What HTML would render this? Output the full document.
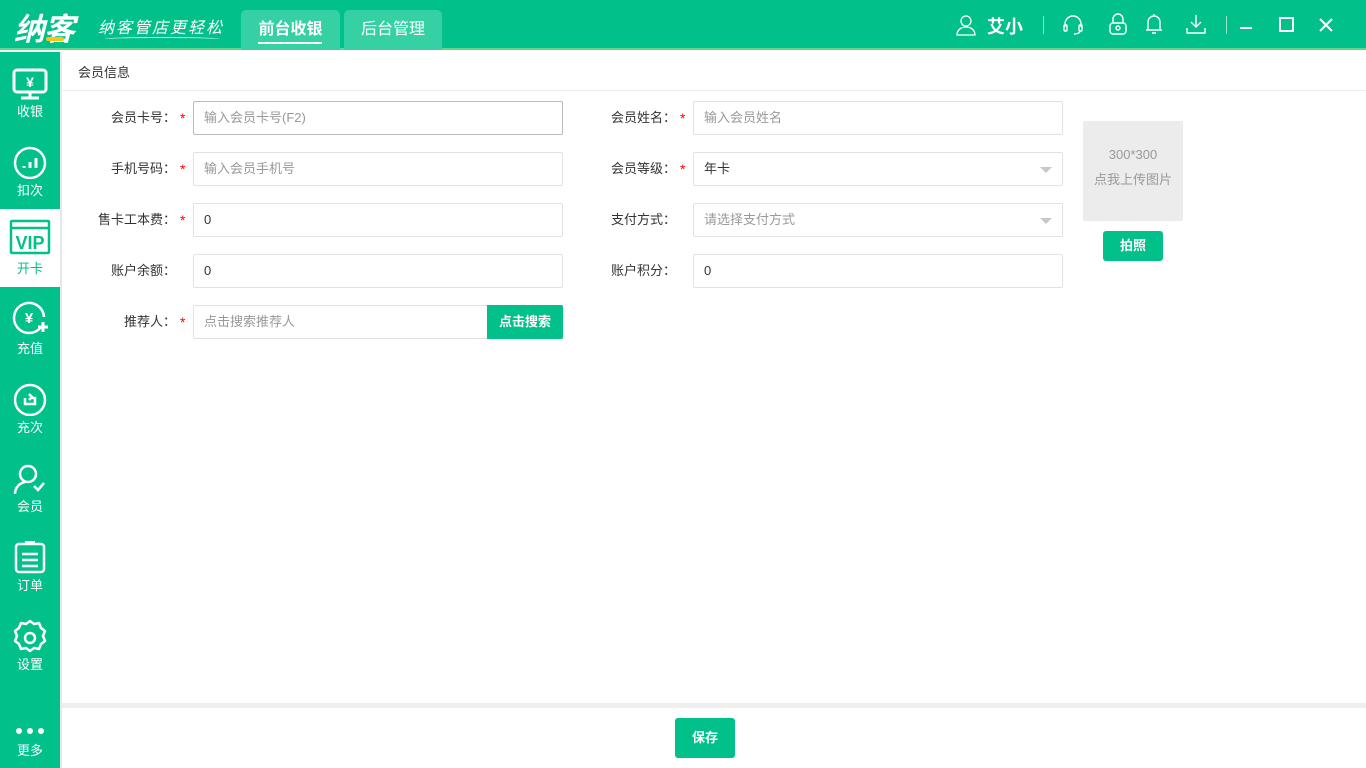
<!DOCTYPE html>
<html><head><meta charset="utf-8"><style>
*{margin:0;padding:0;box-sizing:border-box}
body{width:1366px;height:768px;overflow:hidden;position:relative;background:#fff;font-family:"Liberation Sans","Noto Sans CJK SC",sans-serif;font-size:13px;color:#333}
.abs{position:absolute}
.top{left:0;top:0;width:1366px;height:50px;background:#02c08a;border-bottom:2px solid #5fd88f}
.tab{top:10px;height:40px;border-radius:5px 5px 0 0;background:#35d0a4;color:#fff;font-size:16px;text-align:center;line-height:40px}
.side{left:0;top:52px;width:60px;height:716px;background:#02c08a}
.gap{left:60px;top:52px;width:2px;height:716px;background:#e8e8e8}
.it{left:0;width:60px;height:79px;color:#fff;text-align:center;font-size:13px}
.it svg{display:block;margin:8px auto 0}
.it span{position:absolute;left:0;width:60px;top:49px}
.lbl{width:126px;text-align:right;font-size:13px;color:#333;line-height:34px}
.star{color:#f00;font-size:14px;line-height:34px}
.inp{height:34px;border:1px solid #e2e2e2;border-radius:2px;line-height:32px;padding-left:10px;color:#999;font-size:13px}
.v{color:#333}
.btn{background:#02c08a;color:#fff;border-radius:3px;text-align:center;font-size:13px}
.arr{position:absolute;right:10px;top:14px;width:0;height:0;border-left:6px solid transparent;border-right:6px solid transparent;border-top:6px solid #c8c8c8}
</style></head><body>
<div class="abs top"></div>
<div class="abs" style="left:14px;top:4px;color:#fff;font-size:31px;font-weight:bold;font-style:italic;letter-spacing:-1px">纳客</div>
<div class="abs" style="left:46px;top:37px;width:18px;height:4px;background:#f5c518;border-radius:2px"></div>
<div class="abs" style="left:98px;top:14px;color:#fff;font-size:16px;font-style:italic;letter-spacing:2px">纳客管店更轻松</div>
<div class="abs" style="left:104px;top:37px;width:116px;height:4px;border-top:1px solid #d8f5ea;border-radius:50%"></div>
<div class="abs tab" style="left:241px;width:99px;font-weight:bold">前台收银<div style="position:absolute;left:17px;top:32px;width:64px;height:2px;background:#fff"></div></div>
<div class="abs tab" style="left:344px;width:98px">后台管理</div>
<svg class="abs" style="left:955px;top:14px" width="22" height="22" viewBox="0 0 22 22" fill="none" stroke="#fff" stroke-width="1.3"><circle cx="11" cy="7" r="5"/><path d="M2 21c0-5 4-8 9-8s9 3 9 8z"/></svg>
<div class="abs" style="left:987px;top:13px;color:#fff;font-size:18px;font-weight:bold">艾小</div>
<div class="abs" style="left:1043px;top:16px;width:1px;height:18px;background:#9fe3c8"></div>
<svg class="abs" style="left:1062px;top:14px" width="22" height="22" viewBox="0 0 22 22" fill="none" stroke="#fff" stroke-width="1.4"><path d="M3 13v-3a8 8 0 0 1 16 0v3"/><rect x="2" y="11" width="3" height="6" rx="1"/><rect x="17" y="11" width="3" height="6" rx="1"/><path d="M18 17c0 2-3 3-6 3"/></svg>
<svg class="abs" style="left:1108px;top:13px" width="20" height="22" viewBox="0 0 20 22" fill="none" stroke="#fff" stroke-width="1.4"><path d="M5 10V6a5 5 0 0 1 10 0v4"/><rect x="2" y="10" width="16" height="11" rx="3"/><circle cx="10" cy="15" r="2"/></svg>
<svg class="abs" style="left:1144px;top:13px" width="20" height="22" viewBox="0 0 20 22" fill="none" stroke="#fff" stroke-width="1.4"><path d="M4 17V9a6 6 0 0 1 12 0v8zM2 17h16M8 20h4M10 3V1"/></svg>
<svg class="abs" style="left:1185px;top:13px" width="22" height="22" viewBox="0 0 22 22" fill="none" stroke="#fff" stroke-width="1.4"><path d="M11 2v12M6 9l5 5 5-5M2 15v5h18v-5"/></svg>
<div class="abs" style="left:1226px;top:16px;width:1px;height:18px;background:#9fe3c8"></div>
<div class="abs" style="left:1240px;top:27px;width:12px;height:2px;background:#fff"></div>
<div class="abs" style="left:1279px;top:17px;width:15px;height:15px;border:2px solid #fff"></div>
<svg class="abs" style="left:1319px;top:18px" width="14" height="14" viewBox="0 0 14 14" stroke="#fff" stroke-width="2"><path d="M1 1l12 12M13 1L1 13"/></svg>

<div class="abs side"></div>
<div class="abs gap"></div>
<div class="abs it" style="top:52px"><svg width="38" height="40" viewBox="0 0 38 40" fill="none" stroke="#fff" stroke-width="3"><rect x="3" y="10" width="32" height="22" rx="3"/><path d="M19 32v6M10 38h18"/><text x="19" y="27" font-size="14" fill="#fff" stroke="none" text-anchor="middle" font-weight="bold">¥</text></svg><span style="top:49px">收银</span></div>
<div class="abs it" style="top:131px"><svg width="38" height="40" viewBox="0 0 38 40" fill="none" stroke="#fff" stroke-width="2.5"><circle cx="19" cy="24" r="15"/><path d="M13 29v-2M19 29v-6M25 29v-10" stroke-width="3"/></svg><span>扣次</span></div>
<div class="abs it" style="top:209px;background:#fff;color:#02c08a;height:78px"><svg width="44" height="40" viewBox="0 0 44 40" fill="none" stroke="#02c08a" stroke-width="2.5"><rect x="3" y="4" width="38" height="32" rx="1"/><path d="M3 11h38"/><text x="22" y="32" font-size="18" fill="#02c08a" stroke="none" text-anchor="middle" font-weight="bold">VIP</text></svg><span>开卡</span></div>
<div class="abs it" style="top:289px"><svg width="38" height="40" viewBox="0 0 38 40" fill="none" stroke="#fff" stroke-width="2.5"><path d="M30 30A15 15 0 1 1 33 20"/><path d="M27 30h10M32 25v10" stroke-width="3"/><text x="18" y="26" font-size="15" fill="#fff" stroke="none" text-anchor="middle" font-weight="bold">¥</text></svg><span>充值</span></div>
<div class="abs it" style="top:368px"><svg width="38" height="40" viewBox="0 0 38 40" fill="none" stroke="#fff" stroke-width="2.5"><circle cx="19" cy="24" r="15"/><path d="M14 22v6h10v-6h-4M18 18l3 3-3 3"/></svg><span>充次</span></div>
<div class="abs it" style="top:447px"><svg width="38" height="40" viewBox="0 0 38 40" fill="none" stroke="#fff" stroke-width="2.5"><circle cx="17" cy="19" r="8"/><path d="M4 39c0-7 5-11 10-12M23 31l4 4 6-7"/></svg><span>会员</span></div>
<div class="abs it" style="top:526px"><svg width="38" height="40" viewBox="0 0 38 40" fill="none" stroke="#fff" stroke-width="2.5"><rect x="5" y="10" width="28" height="28" rx="3"/><path d="M14 9h10" stroke-width="4"/><path d="M11 20h16M11 26h16M11 32h16"/></svg><span>订单</span></div>
<div class="abs it" style="top:605px"><svg width="38" height="40" viewBox="0 0 38 40" fill="none" stroke="#fff" stroke-width="2.5"><path d="M19 8l4 3 5-1 2 5 4 3-2 5 2 5-4 3-2 5-5-1-4 3-4-3-5 1-2-5-4-3 2-5-2-5 4-3 2-5 5 1z" stroke-linejoin="round"/><circle cx="19" cy="25" r="5"/></svg><span>设置</span></div>
<div class="abs" style="left:16px;top:728px;width:28px;height:6px;display:flex;justify-content:space-between"><i style="width:6px;height:6px;border-radius:3px;background:#fff"></i><i style="width:6px;height:6px;border-radius:3px;background:#fff"></i><i style="width:6px;height:6px;border-radius:3px;background:#fff"></i></div>
<div class="abs" style="left:0;top:740px;width:60px;text-align:center;color:#fff">更多</div>

<div class="abs" style="left:78px;top:62px;font-size:13px;color:#333">会员信息</div>
<div class="abs" style="left:62px;top:90px;width:1304px;height:1px;background:#eee"></div>

<div class="abs lbl" style="left:50px;top:101px">会员卡号：</div><div class="abs star" style="left:180px;top:101px">*</div><div class="abs inp" style="left:193px;top:101px;width:370px;border-color:#bbb">输入会员卡号(F2)</div>
<div class="abs lbl" style="left:50px;top:152px">手机号码：</div><div class="abs star" style="left:180px;top:152px">*</div><div class="abs inp" style="left:193px;top:152px;width:370px">输入会员手机号</div>
<div class="abs lbl" style="left:50px;top:203px">售卡工本费：</div><div class="abs star" style="left:180px;top:203px">*</div><div class="abs inp v" style="left:193px;top:203px;width:370px">0</div>
<div class="abs lbl" style="left:50px;top:254px">账户余额：</div><div class="abs inp v" style="left:193px;top:254px;width:370px">0</div>
<div class="abs lbl" style="left:50px;top:305px">推荐人：</div><div class="abs star" style="left:180px;top:305px">*</div><div class="abs inp" style="left:193px;top:305px;width:296px">点击搜索推荐人</div>
<div class="abs btn" style="left:487px;top:305px;width:76px;height:34px;line-height:34px;border-radius:0 2px 2px 0;font-weight:bold">点击搜索</div>

<div class="abs lbl" style="left:550px;top:101px">会员姓名：</div><div class="abs star" style="left:680px;top:101px">*</div><div class="abs inp" style="left:693px;top:101px;width:370px">输入会员姓名</div>
<div class="abs lbl" style="left:550px;top:152px">会员等级：</div><div class="abs star" style="left:680px;top:152px">*</div><div class="abs inp v" style="left:693px;top:152px;width:370px">年卡<i class="arr"></i></div>
<div class="abs lbl" style="left:550px;top:203px">支付方式：</div><div class="abs inp" style="left:693px;top:203px;width:370px">请选择支付方式<i class="arr"></i></div>
<div class="abs lbl" style="left:550px;top:254px">账户积分：</div><div class="abs inp v" style="left:693px;top:254px;width:370px">0</div>

<div class="abs" style="left:1083px;top:121px;width:100px;height:100px;background:#ececec;border-radius:2px;color:#999;text-align:center;font-size:13px;padding-top:21px;line-height:25px">300*300<br>点我上传图片</div>
<div class="abs btn" style="left:1103px;top:231px;width:60px;height:30px;line-height:30px;font-weight:bold">拍照</div>

<div class="abs" style="left:62px;top:703px;width:1304px;height:5px;background:#eee"></div>
<div class="abs btn" style="left:675px;top:718px;width:60px;height:40px;line-height:40px;font-weight:bold">保存</div>
</body></html>
